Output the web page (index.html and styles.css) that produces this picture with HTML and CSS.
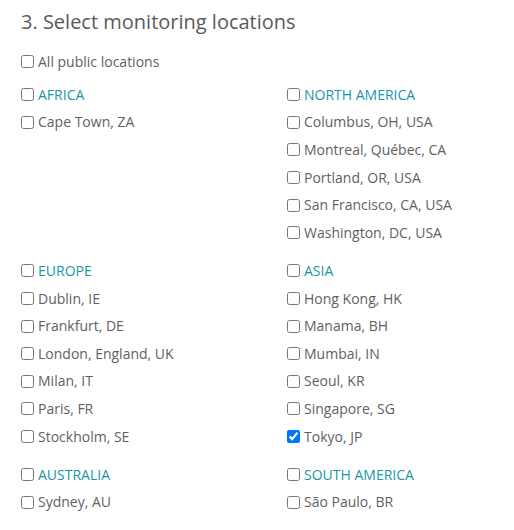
FILE: index.html
```html
<!DOCTYPE html>
<html>
<head>
<meta charset="utf-8">
<link rel="stylesheet" href="styles.css">
</head>
<body>
<div class="panel">
  <h2 class="title">3. Select monitoring locations</h2>
  <label class="row"><input type="checkbox" class="cb"><span>All public locations</span></label>
  <div class="grid">
    <div class="group">
      <label class="row region"><input type="checkbox" class="cb"><span>AFRICA</span></label>
      <label class="row"><input type="checkbox" class="cb"><span>Cape Town, ZA</span></label>
    </div>
    <div class="group">
      <label class="row region"><input type="checkbox" class="cb"><span>NORTH AMERICA</span></label>
      <label class="row"><input type="checkbox" class="cb"><span>Columbus, OH, USA</span></label>
      <label class="row"><input type="checkbox" class="cb"><span>Montreal, Québec, CA</span></label>
      <label class="row"><input type="checkbox" class="cb"><span>Portland, OR, USA</span></label>
      <label class="row"><input type="checkbox" class="cb"><span>San Francisco, CA, USA</span></label>
      <label class="row"><input type="checkbox" class="cb"><span>Washington, DC, USA</span></label>
    </div>
    <div class="group">
      <label class="row region"><input type="checkbox" class="cb"><span>EUROPE</span></label>
      <label class="row"><input type="checkbox" class="cb"><span>Dublin, IE</span></label>
      <label class="row"><input type="checkbox" class="cb"><span>Frankfurt, DE</span></label>
      <label class="row"><input type="checkbox" class="cb"><span>London, England, UK</span></label>
      <label class="row"><input type="checkbox" class="cb"><span>Milan, IT</span></label>
      <label class="row"><input type="checkbox" class="cb"><span>Paris, FR</span></label>
      <label class="row"><input type="checkbox" class="cb"><span>Stockholm, SE</span></label>
    </div>
    <div class="group">
      <label class="row region"><input type="checkbox" class="cb"><span>ASIA</span></label>
      <label class="row"><input type="checkbox" class="cb"><span>Hong Kong, HK</span></label>
      <label class="row"><input type="checkbox" class="cb"><span>Manama, BH</span></label>
      <label class="row"><input type="checkbox" class="cb"><span>Mumbai, IN</span></label>
      <label class="row"><input type="checkbox" class="cb"><span>Seoul, KR</span></label>
      <label class="row"><input type="checkbox" class="cb"><span>Singapore, SG</span></label>
      <label class="row"><input type="checkbox" class="cb" checked><span>Tokyo, JP</span></label>
    </div>
    <div class="group">
      <label class="row region"><input type="checkbox" class="cb"><span>AUSTRALIA</span></label>
      <label class="row"><input type="checkbox" class="cb"><span>Sydney, AU</span></label>
    </div>
    <div class="group">
      <label class="row region"><input type="checkbox" class="cb"><span>SOUTH AMERICA</span></label>
      <label class="row"><input type="checkbox" class="cb"><span>São Paulo, BR</span></label>
    </div>
  </div>
</div>
</body>
</html>
```
FILE: styles.css
```css
html, body {
  margin: 0;
  padding: 0;
  background: #ffffff;
}
body {
  font-family: "Open Sans", "Noto Sans", sans-serif;
  color: #5f5f5f;
}
.panel {
  padding: 8px 0 0 21px;
}
.title {
  margin: 0 0 12px 0;
  font-size: 20px;
  line-height: 28px;
  font-weight: 400;
  color: #5a5a5a;
}
.row {
  display: flex;
  align-items: center;
  gap: 4px;
  height: 27.6px;
  font-size: 14px;
  line-height: 20px;
}
.cb {
  margin: 0;
  width: 13px;
  height: 13px;
  flex: none;
}
.region {
  color: #1897a8;
}
.grid {
  display: grid;
  grid-template-columns: 266px 1fr;
  margin-top: 5.4px;
}
.group {
  margin-bottom: 10.6px;
}
```
